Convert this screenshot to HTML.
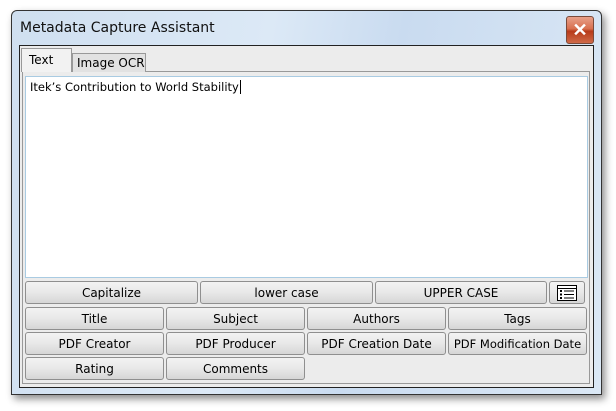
<!DOCTYPE html>
<html><head><style>
*{box-sizing:border-box;margin:0;padding:0}
body{width:616px;height:411px;background:#fff;position:relative;overflow:hidden;font-family:"Liberation Sans",sans-serif;font-size:12px;color:#000}
.win{position:absolute;left:11px;top:10px;width:591px;height:385px;border:1px solid #333;border-radius:6px 6px 0 0;background:linear-gradient(100deg,#cfdff0 0%,#dce9f6 40%,#c9dbf0 60%,#dbe8f5 100%);box-shadow:3px 4px 8px rgba(0,0,0,.45)}
.title{position:absolute;left:20px;top:20px;color:#111;font-family:"DejaVu Sans","Liberation Sans",sans-serif;font-size:14px}
.close{position:absolute;left:566px;top:16px;width:28px;height:28px;border:1px solid #7a4a3a;border-radius:3px;background:linear-gradient(#e8a08a 0%,#d8704f 45%,#b73b1a 55%,#d06a48 100%);color:#fff;font-size:18px;font-weight:bold;text-align:center;line-height:26px}
.client{position:absolute;left:19px;top:45px;width:575px;height:343px;border:1px solid #222;background:#ececec}
.panel{position:absolute;left:22px;top:71px;width:568px;height:313px;border:1px solid #999;background:#ececec}
.tab{position:absolute;border:1px solid #999;border-bottom:none;padding-left:7px}
.ta{position:absolute;left:25px;top:76px;width:563px;height:202px;background:#fff;border:1px solid #a9cbe2;padding:3px 4px;font-family:"DejaVu Sans",sans-serif;font-size:11.5px}
.b{position:absolute;height:23px;border:1px solid #8f8f8f;border-radius:3px;background:linear-gradient(#f3f3f3 0%,#e8e8e8 50%,#d6d6d6 100%);text-align:center;line-height:23px;font-family:"DejaVu Sans",sans-serif;font-size:12px}
</style></head><body>
<div class="win"></div>
<div class="title">Metadata Capture Assistant</div>
<div class="close">✕</div>
<div class="client"></div>
<div class="panel"></div>
<div class="tab" style="left:72px;top:53px;width:74px;height:19px;background:#e2e2e2;line-height:19px;font-family:'DejaVu Sans',sans-serif;font-size:12px;padding-left:4px">Image OCR</div>
<div class="tab" style="left:21px;top:48px;width:51px;height:24px;background:#f2f2f2;line-height:22px;font-family:'DejaVu Sans',sans-serif;font-size:12px">Text</div>
<div class="ta">Itek’s Contribution to World Stability<span style="border-left:1px solid #000;margin-left:1px"></span></div>
<div class="b" style="left:25px;top:281px;width:173px">Capitalize</div>
<div class="b" style="left:200px;top:281px;width:173px">lower case</div>
<div class="b" style="left:375px;top:281px;width:172px">UPPER CASE</div>
<div class="b" style="left:549px;top:281px;width:36px"><svg width="20" height="16" viewBox="0 0 20 16" style="margin-top:3px"><rect x="0.5" y="0.5" width="19" height="15" fill="#fff" stroke="#000"/><line x1="0" y1="3.5" x2="20" y2="3.5" stroke="#000"/><rect x="3" y="5" width="2" height="2"/><rect x="3" y="8.5" width="2" height="2"/><rect x="3" y="12" width="2" height="2"/><line x1="7" y1="6" x2="17" y2="6" stroke="#000"/><line x1="7" y1="9.5" x2="17" y2="9.5" stroke="#000"/><line x1="7" y1="13" x2="17" y2="13" stroke="#000"/></svg></div>
<div class="b" style="left:25px;top:307px;width:139px">Title</div>
<div class="b" style="left:166px;top:307px;width:139px">Subject</div>
<div class="b" style="left:307px;top:307px;width:139px">Authors</div>
<div class="b" style="left:448px;top:307px;width:139px">Tags</div>
<div class="b" style="left:25px;top:332px;width:139px">PDF Creator</div>
<div class="b" style="left:166px;top:332px;width:139px">PDF Producer</div>
<div class="b" style="left:307px;top:332px;width:139px">PDF Creation Date</div>
<div class="b" style="left:448px;top:332px;width:139px;font-size:11.5px">PDF Modification Date</div>
<div class="b" style="left:25px;top:357px;width:139px">Rating</div>
<div class="b" style="left:166px;top:357px;width:139px">Comments</div>
</body></html>
